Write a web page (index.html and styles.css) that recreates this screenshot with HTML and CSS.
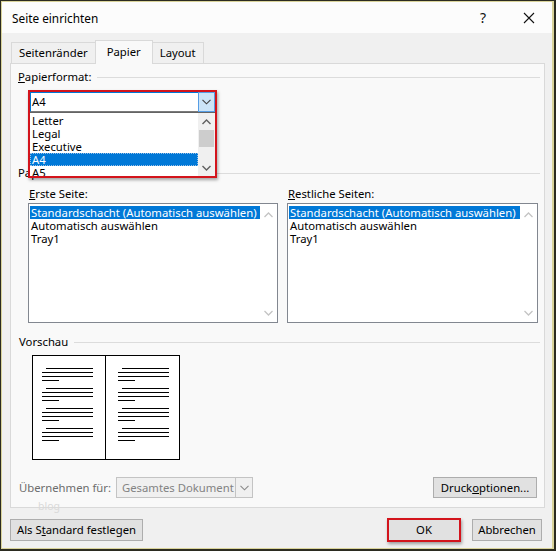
FILE: index.html
```html
<!DOCTYPE html>
<html lang="de">
<head>
<meta charset="utf-8">
<title>Seite einrichten</title>
<link rel="stylesheet" href="styles.css">
</head>
<body>
<div class="frame">
  <div class="window">
    <div class="titlebar">
      <span class="title">Seite einrichten</span>
      <span class="tb-btn help">?</span>
      <span class="tb-btn close"><svg width="12" height="12" viewBox="0 0 12 12"><path d="M1 1L11 11M11 1L1 11" stroke="#111" stroke-width="1.1" fill="none"/></svg></span>
    </div>
    <div class="client">
      <div class="tabs">
        <div class="tab">Seitenränder</div>
        <div class="tab active">Papier</div>
        <div class="tab">Layout</div>
      </div>
      <div class="panel">
        <div class="grouphead"><span><u>P</u>apierformat:</span><span class="rule"></span></div>
        <div class="fmt">
          <div class="combo open">
            <span class="val">A4</span>
            <span class="ddbtn"><svg width="9" height="6" viewBox="0 0 9 6"><path d="M0.5 0.8L4.5 4.8L8.5 0.8" stroke="#404040" stroke-width="1.1" fill="none"/></svg></span>
          </div>
          <div class="popup">
            <ul class="droplist">
              <li>Letter</li>
              <li>Legal</li>
              <li>Executive</li>
              <li class="sel">A4</li>
              <li>A5</li>
            </ul>
            <div class="vscroll">
              <span class="arrow"><svg width="9" height="6" viewBox="0 0 9 6"><path d="M0.5 5L4.5 1L8.5 5" stroke="#606060" stroke-width="1.4" fill="none"/></svg></span>
              <span class="thumb"></span>
              <span class="track"></span>
              <span class="arrow"><svg width="9" height="6" viewBox="0 0 9 6"><path d="M0.5 1L4.5 5L8.5 1" stroke="#606060" stroke-width="1.4" fill="none"/></svg></span>
            </div>
          </div>
          <div class="callout"></div>
        </div>
        <div class="grouphead feed"><span>Papierzufuhr</span><span class="rule"></span></div>
        <div class="trays">
          <div class="traycol">
            <div class="lbl"><u>E</u>rste Seite:</div>
            <div class="listbox">
              <ul class="items">
                <li class="sel">Standardschacht (Automatisch auswählen)</li>
                <li>Automatisch auswählen</li>
                <li>Tray1</li>
              </ul>
              <div class="lscroll">
                <svg width="9" height="6" viewBox="0 0 9 6"><path d="M0.5 5L4.5 1L8.5 5" stroke="#c4c4c4" stroke-width="1.3" fill="none"/></svg>
                <svg width="9" height="6" viewBox="0 0 9 6"><path d="M0.5 1L4.5 5L8.5 1" stroke="#c4c4c4" stroke-width="1.3" fill="none"/></svg>
              </div>
            </div>
          </div>
          <div class="traycol">
            <div class="lbl"><u>R</u>estliche Seiten:</div>
            <div class="listbox">
              <ul class="items">
                <li class="sel">Standardschacht (Automatisch auswählen)</li>
                <li>Automatisch auswählen</li>
                <li>Tray1</li>
              </ul>
              <div class="lscroll">
                <svg width="9" height="6" viewBox="0 0 9 6"><path d="M0.5 5L4.5 1L8.5 5" stroke="#c4c4c4" stroke-width="1.3" fill="none"/></svg>
                <svg width="9" height="6" viewBox="0 0 9 6"><path d="M0.5 1L4.5 5L8.5 1" stroke="#c4c4c4" stroke-width="1.3" fill="none"/></svg>
              </div>
            </div>
          </div>
        </div>
        <div class="grouphead prev"><span>Vorschau</span><span class="rule"></span></div>
        <div class="book">
          <svg width="148" height="105" viewBox="0 0 148 105" shape-rendering="crispEdges">
            <rect x="0.5" y="0.5" width="147" height="104" fill="#fff" stroke="#000"/>
            <line x1="73.5" y1="0" x2="73.5" y2="105" stroke="#000"/>
            <g stroke="#000" stroke-width="1">
              <path d="M14 13.5H61M10 17.5H61M10 21.5H61M10 25.5H27"/>
              <path d="M14 33.5H61M10 37.5H61M10 41.5H61M10 45.5H27"/>
              <path d="M14 53.5H61M10 57.5H61M10 61.5H61M10 65.5H27"/>
              <path d="M14 73.5H61M10 77.5H61M10 81.5H61M10 85.5H27"/>
              <path d="M90 13.5H137M86 17.5H137M86 21.5H137M86 25.5H103"/>
              <path d="M90 33.5H137M86 37.5H137M86 41.5H137M86 45.5H103"/>
              <path d="M90 53.5H137M86 57.5H137M86 61.5H137M86 65.5H103"/>
              <path d="M90 73.5H137M86 77.5H137M86 81.5H137M86 85.5H103"/>
            </g>
          </svg>
        </div>
        <div class="apply">
          <span class="dis">Übernehmen für:</span>
          <div class="combo disabled">
            <span class="val">Gesamtes Dokument</span>
            <span class="ddbtn"><svg width="9" height="6" viewBox="0 0 9 6"><path d="M0.5 0.8L4.5 4.8L8.5 0.8" stroke="#8a8a8a" stroke-width="1.1" fill="none"/></svg></span>
          </div>
          <button class="btn print">Druck<u>o</u>ptionen...</button>
        </div>
        <span class="watermark">blog</span>
      </div>
      <div class="footer">
        <button class="btn std">Als S<u>t</u>andard festlegen</button>
        <span class="okwrap"><button class="btn ok">OK</button></span>
        <button class="btn cancel">Abbrechen</button>
      </div>
    </div>
  </div>
</div>
</body>
</html>
```

FILE: styles.css
```css
* { box-sizing: border-box; margin: 0; padding: 0; }
html, body { width: 556px; height: 551px; overflow: hidden; background: #23231a; }
body { font-family: "Noto Sans", "Open Sans", sans-serif; font-size: 11.3px; line-height: 16px; color: #000; }
ul { list-style: none; }
u { text-decoration: underline; text-underline-offset: 1px; }

.frame { width: 556px; height: 551px; padding: 1px 2px 2px 1px; background: #2b2b20; }
.window { height: 100%; display: flex; flex-direction: column; border: 1px solid #d9d39a; border-right-width: 2px; background: #f0f0f0; }

.titlebar { height: 31px; flex: none; display: flex; align-items: center; background: #fcfcfc; padding-left: 10px; }
.title { flex: 1; font-size: 11.8px; }
.tb-btn { display: flex; align-items: center; justify-content: center; height: 31px; }
.help { width: 46px; font-size: 14px; color: #111; }
.close { width: 46px; }

.client { flex: 1; display: flex; flex-direction: column; padding: 0 7px 0 8px; }

.tabs { height: 30px; display: flex; align-items: flex-end; padding-left: 1px; }
.tab { height: 21px; padding: 0 7px; border: 1px solid #d9d9d9; border-bottom: none; margin-right: -1px; background: #f0f0f0; line-height: 19px; }
.tab.active { height: 24px; margin-bottom: -1px; background: #f9f9f9; position: relative; z-index: 1; padding: 0 11px; line-height: 22px; }

.panel { height: 445px; border: 1px solid #d9d9d9; background: #f9f9f9; padding: 5px 4px 0 0; display: flex; flex-direction: column; position: relative; }

.grouphead { display: flex; align-items: center; gap: 6px; margin-left: 7px; height: 16px; }
.grouphead .rule { flex: 1; height: 1px; background: #dcdcdc; }
.grouphead.feed { margin-top: 53px; }
.grouphead.prev { margin-left: 8px; margin-top: 11px; }

.fmt { position: relative; margin: 7px 0 0 19px; width: 185px; height: 20px; }
.combo { display: flex; height: 20px; border: 1px solid #7a7a7a; background: #fff; }
.combo .val { flex: 1; padding-left: 1px; line-height: 18px; white-space: nowrap; }
.combo .ddbtn { width: 17px; display: flex; align-items: center; justify-content: center; }
.combo.open { border-color: #0078d7; border-bottom-color: #7a7a7a; }
.combo.open .ddbtn { background: #cce4f7; border: 1px solid #569de5; margin: -1px -1px -1px 0; width: 17px; }

.popup { position: absolute; top: 20px; left: 0; width: 185px; height: 64px; background: #fff; border-top: 1px solid #646464; display: flex; overflow: hidden; z-index: 2; }
.droplist { flex: 1; padding-top: 1px; }
.droplist li { height: 13px; line-height: 13px; padding-left: 2px; }
.droplist li.sel { background: #0078d7; color: #fff; outline: 1px dotted #9ac0e6; outline-offset: -1px; }
.vscroll { width: 17px; background: #f0f0f0; display: flex; flex-direction: column; }
.vscroll .arrow { height: 17px; display: flex; align-items: center; justify-content: center; flex: none; }
.vscroll .thumb { height: 17px; margin: 0 1px; background: #cdcdcd; flex: none; }
.vscroll .track { flex: 1; }

.callout { position: absolute; left: -2px; top: -2px; width: 189px; height: 88px; border: 2px solid #d3141c; box-shadow: 1px 2px 3px rgba(0,0,0,0.35); z-index: 3; pointer-events: none; }

.trays { display: grid; grid-template-columns: 250px 251px; column-gap: 9px; margin: 5px 0 0 17px; }
.lbl { padding-left: 1px; height: 16px; margin-bottom: 1px; }
.listbox { height: 120px; border: 1px solid #828790; background: #fff; display: flex; padding: 2px 0 0 1px; }
.listbox .items { flex: 1; }
.listbox li { height: 13px; line-height: 13px; padding-left: 1px; white-space: nowrap; }
.listbox li.sel { background: #0078d7; color: #fff; }
.lscroll { width: 17px; margin-top: -2px; display: flex; flex-direction: column; justify-content: space-between; align-items: center; padding: 8px 0 6px; }

.book { margin: 5px 0 0 21px; height: 105px; }
.book svg { display: block; }

.apply { display: flex; align-items: center; margin: 17px 3px 0 8px; height: 21px; }
.dis { color: #6d6d6d; width: 97px; }
.combo.disabled { width: 137px; height: 21px; border-color: #c4c4c4; background: #f0f0f0; color: #838383; }
.combo.disabled .val { padding-left: 5px; line-height: 19px; }
.combo.disabled .ddbtn { border-left: 1px solid #c4c4c4; }

.btn { font-family: inherit; font-size: 11.3px; color: #000; background: #e1e1e1; border: 1px solid #adadad; height: 22px; line-height: 18px; padding: 0; }
.print { margin-left: auto; width: 104px; height: 21px; }

.watermark { position: absolute; left: 27px; top: 434px; color: #dadada; font-size: 10.5px; }

.footer { display: flex; align-items: center; margin-top: 10px; }
.std { width: 133px; }
.okwrap { margin-left: auto; border: 2px solid #d3141c; box-shadow: 1px 2px 3px rgba(0,0,0,0.35); display: flex; }
.ok { width: 70px; height: 20px; border: none; background: #e1e1e1; }
.cancel { width: 70px; margin-left: 11px; margin-right: 3px; }
```
